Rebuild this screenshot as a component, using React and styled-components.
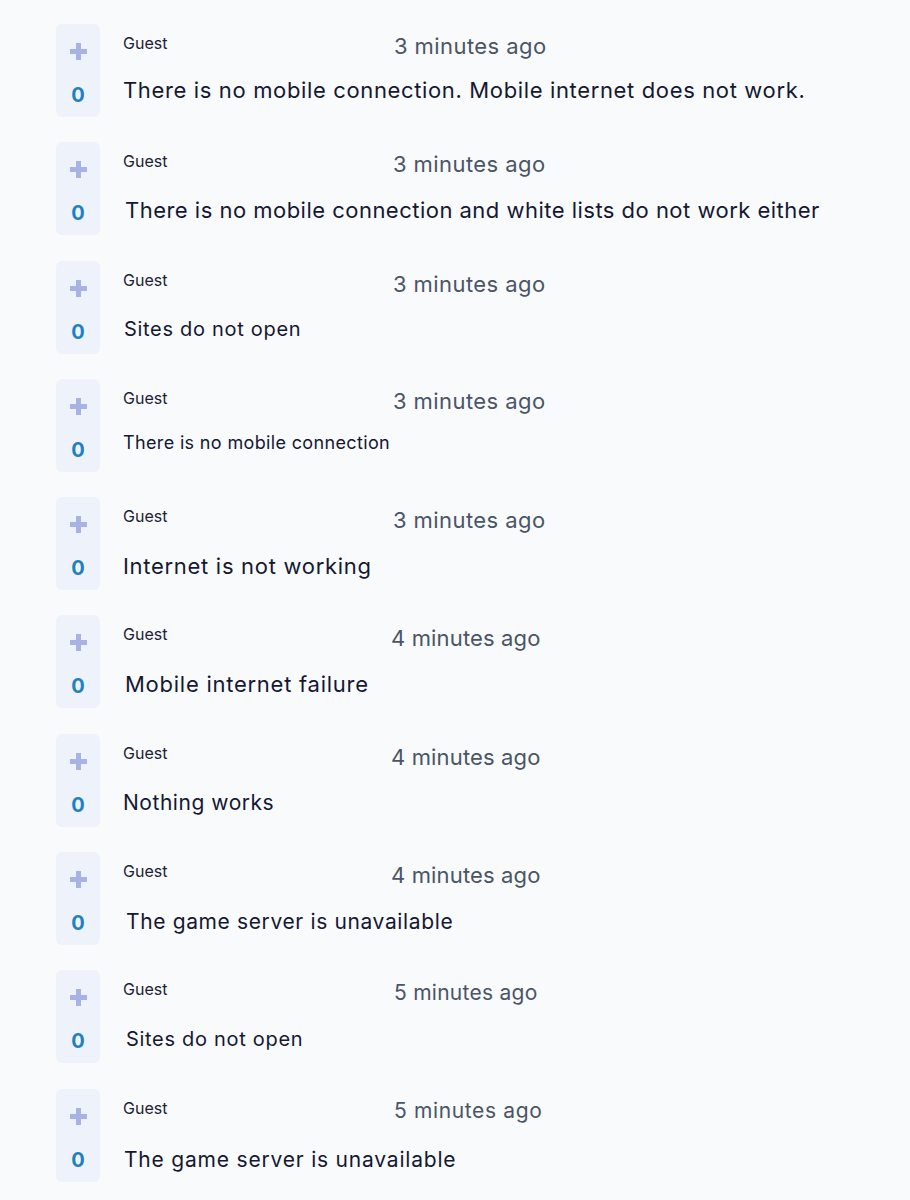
import React from 'react';
import styled, { createGlobalStyle } from 'styled-components';

const GlobalStyle = createGlobalStyle`
  html, body {
    margin: 0;
    padding: 0;
    background: #f9fafc;
    font-family: Inter, "Noto Sans", sans-serif;
  }
`;

const Feed = styled.div`
  display: flex;
  flex-direction: column;
  gap: 25.3px;
  padding: 24px 0 0 56px;
`;

const Row = styled.div`
  display: flex;
  gap: 23px;
`;

const VoteBox = styled.div`
  flex: none;
  width: 44px;
  height: 93px;
  border-radius: 6px;
  background: #eef3fb;
  display: flex;
  flex-direction: column;
  align-items: center;
  padding-top: 19px;
  box-sizing: border-box;
`;

const PlusIcon = styled.svg`
  width: 17px;
  height: 17px;
  display: block;
`;

const Count = styled.div`
  margin-top: 25px;
  font-size: 20px;
  font-weight: 700;
  line-height: 1;
  color: #1f80c2;
`;

const Body = styled.div`
  display: flex;
  flex-direction: column;
`;

const Header = styled.div`
  display: flex;
  align-items: flex-start;
  padding-top: 11px;
`;

const Author = styled.span`
  width: ${p => p.$col}px;
  flex: none;
  font-size: 16px;
  line-height: 1;
  color: #1d2236;
`;

const Time = styled.span`
  margin-top: ${p => p.$dy}px;
  font-size: ${p => p.$size}px;
  letter-spacing: ${p => p.$ls}px;
  line-height: 1;
  color: #4a5567;
`;

const Text = styled.div`
  margin-top: ${p => p.$dy}px;
  margin-left: ${p => p.$dx}px;
  font-size: ${p => p.$size}px;
  letter-spacing: ${p => p.$ls}px;
  line-height: 1;
  color: #141833;
  white-space: nowrap;
`;

const comments = [
  { time: '3 minutes ago', col: 271, tdy: 0, tsize: 22, tls: 0.42, text: 'There is no mobile connection. Mobile internet does not work.', size: 22, ls: 0.64, dx: 0, dy: 22 },
  { time: '3 minutes ago', col: 270, tdy: 0, tsize: 22, tls: 0.42, text: 'There is no mobile connection and white lists do not work either', size: 22, ls: 0.48, dx: 2, dy: 24 },
  { time: '3 minutes ago', col: 270, tdy: 1, tsize: 22, tls: 0.42, text: 'Sites do not open', size: 20, ls: 0.7, dx: 1, dy: 24 },
  { time: '3 minutes ago', col: 270, tdy: 0, tsize: 22, tls: 0.42, text: 'There is no mobile connection', size: 18, ls: 0.35, dx: 0, dy: 22 },
  { time: '3 minutes ago', col: 270, tdy: 1, tsize: 22, tls: 0.42, text: 'Internet is not working', size: 22, ls: 0.7, dx: 0, dy: 24 },
  { time: '4 minutes ago', col: 268, tdy: 1, tsize: 22, tls: 0.15, text: 'Mobile internet failure', size: 22, ls: 0.74, dx: 2, dy: 24 },
  { time: '4 minutes ago', col: 268, tdy: 1, tsize: 22, tls: 0.15, text: 'Nothing works', size: 21, ls: 0.54, dx: 0, dy: 24 },
  { time: '4 minutes ago', col: 268, tdy: 1, tsize: 22, tls: 0.15, text: 'The game server is unavailable', size: 21, ls: 0.63, dx: 3, dy: 25 },
  { time: '5 minutes ago', col: 271, tdy: 1, tsize: 21, tls: 0.26, text: 'Sites do not open', size: 20, ls: 0.7, dx: 3, dy: 26 },
  { time: '5 minutes ago', col: 271, tdy: 0, tsize: 21, tls: 0.64, text: 'The game server is unavailable', size: 21, ls: 0.8, dx: 1, dy: 28 },
];

const Plus = () => (
  <PlusIcon viewBox="0 0 17 17">
    <path d="M6 0h5v6h6v5h-6v6H6v-6H0V6h6z" fill="#a7b3e4" />
  </PlusIcon>
);

const App = () => (
  <>
    <GlobalStyle />
    <Feed>
      {comments.map((c, i) => (
        <Row key={i}>
          <VoteBox>
            <Plus />
            <Count>0</Count>
          </VoteBox>
          <Body>
            <Header>
              <Author $col={c.col}>Guest</Author>
              <Time $dy={c.tdy} $size={c.tsize} $ls={c.tls}>{c.time}</Time>
            </Header>
            <Text $dx={c.dx} $dy={c.dy} $size={c.size} $ls={c.ls}>{c.text}</Text>
          </Body>
        </Row>
      ))}
    </Feed>
  </>
);

export default App;
